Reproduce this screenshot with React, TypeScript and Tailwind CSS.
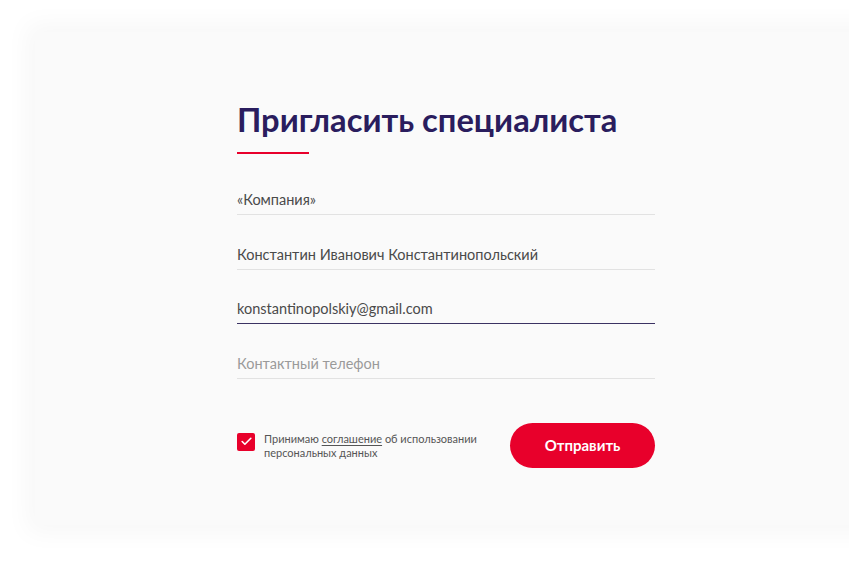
import { Check } from "lucide-react";

const fields = [
  { value: "«Компания»", active: false, placeholder: false },
  { value: "Константин Иванович Константинопольский", active: false, placeholder: false },
  { value: "konstantinopolskiy@gmail.com", active: true, placeholder: false },
  { value: "Контактный телефон", active: false, placeholder: true },
];

function Field({ value, active, placeholder }: { value: string; active: boolean; placeholder: boolean }) {
  return (
    <div
      className={
        "pt-[2px] pb-[4px] border-b " + (active ? "border-[#3b3263]" : "border-[#e2e2e2]")
      }
    >
      <div
        className={
          "text-[14.5px] leading-[20px] " +
          (placeholder ? "text-[#9a9a9a]" : "text-[#4a4a4a]")
        }
      >
        {value}
      </div>
    </div>
  );
}

export default function App() {
  return (
    <div
      className="w-[849px] h-[564px] bg-white overflow-hidden"
      style={{ fontFamily: "Lato, 'Noto Sans', sans-serif" }}
    >
      <div className="ml-[35px] mt-[32px] w-[900px] h-[493px] bg-[#fafafa] shadow-[0_0_24px_8px_rgba(0,0,0,0.035)] pl-[202px] pt-[68px]">
        <div className="w-[418px]">
          <h1 className="text-[32.7px] leading-[40px] font-bold text-[#2a1d5e]">
            Пригласить специалиста
          </h1>
          <div className="mt-[12px] h-[2px] w-[72px] bg-[#e8002b]" />

          <div className="mt-[34px] flex flex-col gap-[27.7px]">
            {fields.map((f, i) => (
              <Field key={i} {...f} />
            ))}
          </div>

          <div className="mt-[44px] flex items-center justify-between">
            <div className="flex items-start gap-[9px]">
              <div className="mt-[1px] w-[18px] h-[18px] rounded-[2px] bg-[#e8002b] flex items-center justify-center">
                <Check className="w-[13px] h-[13px] text-white" strokeWidth={3} />
              </div>
              <p className="text-[11px] leading-[14px] text-[#555555]">
                Принимаю <span className="underline underline-offset-2">соглашение</span> об использовании
                <br />
                персональных данных
              </p>
            </div>
            <button className="w-[145px] h-[45px] rounded-full bg-[#e8002b] text-white text-[15px] font-bold">
              Отправить
            </button>
          </div>
        </div>
      </div>
    </div>
  );
}
